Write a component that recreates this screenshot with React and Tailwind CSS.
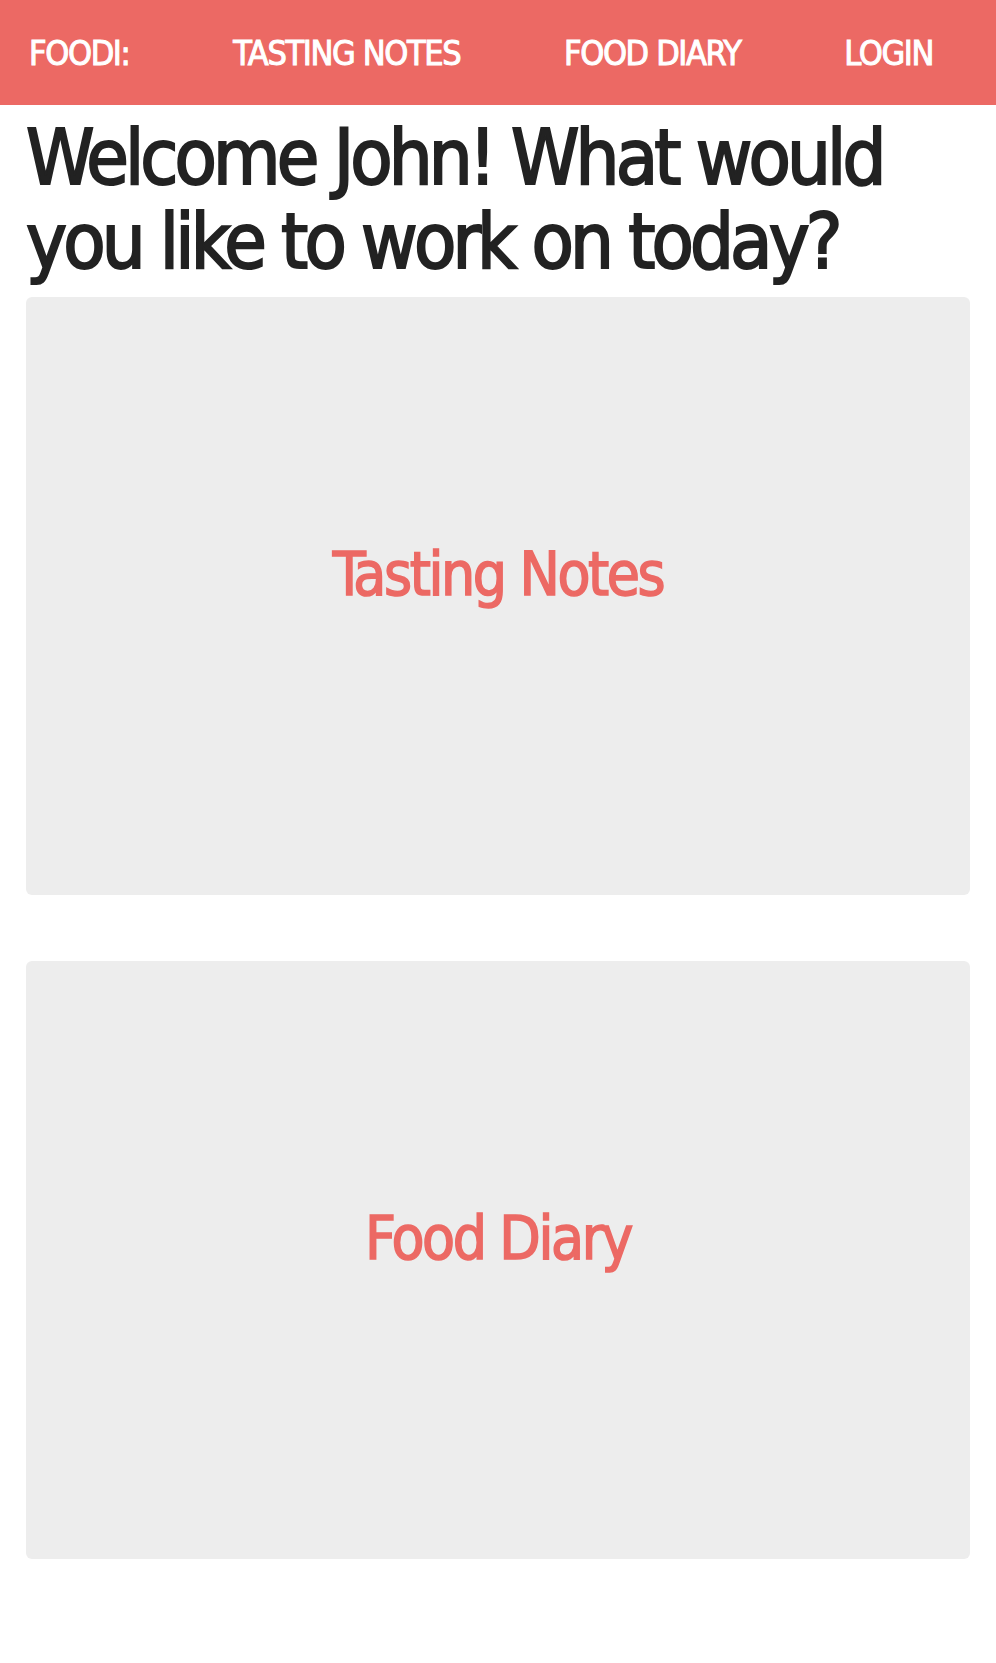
import React from "react";

const links = ["FOODI:", "TASTING NOTES", "FOOD DIARY", "LOGIN"];

const Card = ({ label, className = "" }) => (
    <a href="#" className={`flex items-center justify-center h-[598px] rounded-md bg-[#ededed] pb-[44px] ${className}`}>
        <span className="text-[60px] leading-none tracking-[-0.04em] [-webkit-text-stroke-width:1.5px] text-[#ec6964]">{label}</span>
    </a>
);

const App = () => {
    return (
        <div className="min-h-screen bg-white font-['DejaVu_Sans',sans-serif] [font-stretch:condensed]">
            {/* Nav */}
            <nav className="h-[105px] bg-[#ec6964] flex items-center justify-between pl-[29px] pr-[63px]">
                {links.map((l) => (
                    <a key={l} href="#" className="text-[34px] leading-none tracking-[-0.04em] [-webkit-text-stroke-width:1px] text-white">
                        {l}
                    </a>
                ))}
            </nav>

            <main className="px-[26px]">
                <h1 className="mt-[11px] text-[77px] leading-[84px] tracking-[-0.05em] [-webkit-text-stroke-width:2px] text-[#222222]">
                    Welcome John! What would you like to work on today?
                </h1>

                <Card label="Tasting Notes" className="mt-[13px]" />
                <Card label="Food Diary" className="mt-[66px]" />
            </main>
        </div>
    );
};

export default App;
